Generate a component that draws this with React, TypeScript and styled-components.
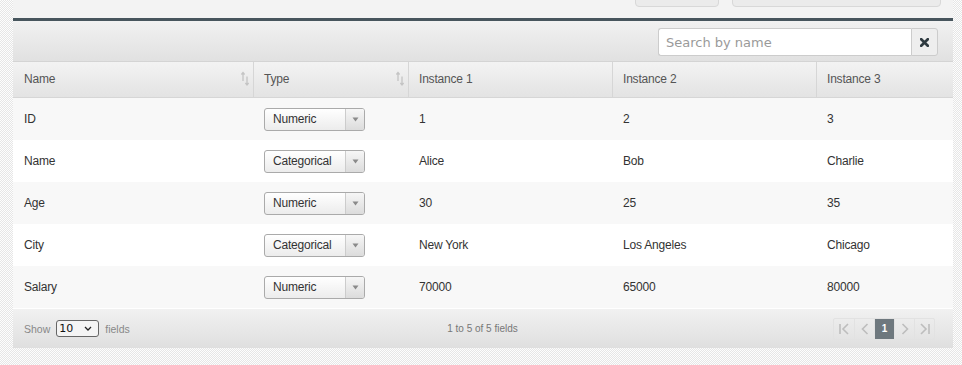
import React from "react";
import styled, { createGlobalStyle } from "styled-components";

const Global = createGlobalStyle`
  html, body { margin: 0; padding: 0; }
  body {
    width: 962px;
    height: 365px;
    overflow: hidden;
    background-color: #fdfdfd;
    background-image: repeating-conic-gradient(#e6e6e6 0 25%, #fdfdfd 0 50%);
    background-size: 2px 2px;
    font-family: "Liberation Sans", Arial, sans-serif;
  }
`;

const Panel = styled.div`
  margin-left: 13px;
  width: 940px;
  display: flex;
  flex-direction: column;
`;

const TopStrip = styled.div`
  height: 18px;
  background: #f3f3f3;
  display: flex;
  align-items: flex-end;
  overflow: hidden;
`;

const TopButtons = styled.div`
  display: flex;
  gap: 13px;
  margin-left: 622px;
  margin-bottom: 11px;
`;

const TopButton = styled.div<{ $w: number }>`
  width: ${(p) => p.$w}px;
  height: 24px;
  box-sizing: border-box;
  border: 1px solid #d8d8d8;
  border-radius: 4px;
  background: #ebebeb;
`;

const DarkRule = styled.div`
  height: 3px;
  background: #47555d;
`;

const Toolbar = styled.div`
  height: 41px;
  box-sizing: border-box;
  border-bottom: 1px solid #d4d4d4;
  background: linear-gradient(#f1f1f1, #e1e1e1);
  display: flex;
  justify-content: flex-end;
  align-items: flex-start;
  padding: 7px 15px 0 0;
`;

const SearchGroup = styled.div`
  display: flex;
  height: 28px;
`;

const SearchInput = styled.input`
  width: 253px;
  height: 28px;
  box-sizing: border-box;
  border: 1px solid #cccccc;
  border-right: none;
  border-radius: 3px 0 0 3px;
  background: #fff;
  padding: 0 7px;
  font-family: "DejaVu Sans", sans-serif;
  font-size: 13px;
  color: #333;
  outline: none;
  &::placeholder { color: #9a9a9a; }
`;

const ClearButton = styled.div`
  width: 27px;
  height: 28px;
  box-sizing: border-box;
  border: 1px solid #cccccc;
  border-radius: 0 3px 3px 0;
  background: #eeeeee;
  display: flex;
  align-items: center;
  justify-content: center;
`;

const Table = styled.div`
  display: grid;
  grid-template-columns: 241px 155px 204px 204px 136px;
`;

const HeadCell = styled.div<{ $last?: boolean; $first?: boolean }>`
  height: 36px;
  box-sizing: border-box;
  border-bottom: 1px solid #d6d6d6;
  border-right: ${(p) => (p.$last ? "none" : "1px solid #d6d6d6")};
  background: linear-gradient(#f3f3f3, #e3e3e3);
  display: flex;
  align-items: center;
  justify-content: space-between;
  padding: 0 3px 2px ${(p) => (p.$first ? 11 : 10)}px;
  font-size: 12px;
  color: #555;
  letter-spacing: -0.2px;
`;

const Cell = styled.div<{ $odd: boolean; $first?: boolean }>`
  height: 42px;
  display: flex;
  align-items: center;
  padding-left: ${(p) => (p.$first ? 11 : 10)}px;
  font-size: 12px;
  color: #333;
  letter-spacing: -0.2px;
  background: ${(p) => (p.$odd ? "#f8f8f8" : "#ffffff")};
`;

const TypeSelect = styled.div`
  width: 101px;
  height: 23px;
  box-sizing: border-box;
  border: 1px solid #aaaaaa;
  border-radius: 3px;
  background: linear-gradient(#ffffff, #ececec);
  display: flex;
  align-items: stretch;
  overflow: hidden;
`;

const TypeLabel = styled.span`
  flex: 1;
  display: flex;
  align-items: center;
  padding-left: 8px;
  font-size: 12px;
  color: #333;
`;

const TypeArrow = styled.span`
  width: 18px;
  border-left: 1px solid #cccccc;
  background: linear-gradient(#f6f6f6, #dcdcdc);
  display: flex;
  align-items: center;
  justify-content: center;
`;

const Footer = styled.div`
  height: 40px;
  box-sizing: border-box;
  border-top: 1px solid #ffffff;
  background: linear-gradient(#f1f1f1, #dfdfdf);
  display: grid;
  grid-template-columns: 1fr auto 1fr;
  align-items: center;
  padding: 0 18px 0 11px;
  font-size: 10px;
  color: #888;
`;

const ShowBox = styled.div`
  display: flex;
  align-items: center;
  gap: 6px;
  font-size: 10.5px;
`;

const PageSize = styled.div`
  width: 43px;
  height: 17px;
  box-sizing: border-box;
  border: 1px solid #666;
  border-radius: 3px;
  background: #f4f4f4;
  display: flex;
  align-items: center;
  justify-content: space-between;
  padding: 0 6px 0 2px;
  font-family: "DejaVu Sans", sans-serif;
  font-size: 11px;
  color: #111;
`;

const Info = styled.div`
  text-align: center;
  color: #777;
  padding-left: 6px;
`;

const Pager = styled.div`
  justify-self: end;
  display: flex;
  border: 1px solid #e2e2e2;
  border-radius: 2px;
`;

const PageBtn = styled.div<{ $active?: boolean }>`
  width: 20px;
  height: 20px;
  box-sizing: border-box;
  border-left: 1px solid #e2e2e2;
  &:first-child { border-left: none; }
  background: ${(p) => (p.$active ? "#6e787e" : "transparent")};
  color: #fff;
  font-size: 10px;
  font-weight: bold;
  display: flex;
  align-items: center;
  justify-content: center;
`;

const SortIcon = () => (
  <svg width="10" height="18" viewBox="0 0 10 18">
    <path d="M3 2.5 L3 11 M1.4 4.5 L3 2.5 L4.6 4.5" stroke="#c4c4c4" strokeWidth="1.3" fill="none" />
    <path d="M7 6.5 L7 15 M5.4 13 L7 15 L8.6 13" stroke="#c4c4c4" strokeWidth="1.3" fill="none" />
  </svg>
);

const Tri = () => (
  <svg width="7" height="5" viewBox="0 0 7 5">
    <path d="M0.5 0.5 L6.5 0.5 L3.5 4.5 Z" fill="#8a8a8a" />
  </svg>
);

const PageIcon = ({ kind }: { kind: "first" | "prev" | "next" | "last" }) => {
  const s = "#bdbdbd";
  return (
    <svg width="14" height="14" viewBox="0 0 14 14">
      {kind === "first" && (
        <>
          <path d="M3 2 L3 12" stroke={s} strokeWidth="1.6" />
          <path d="M11 2 L6 7 L11 12" stroke={s} strokeWidth="1.6" fill="none" />
        </>
      )}
      {kind === "prev" && <path d="M9.5 2 L4.5 7 L9.5 12" stroke={s} strokeWidth="1.6" fill="none" />}
      {kind === "next" && <path d="M4.5 2 L9.5 7 L4.5 12" stroke={s} strokeWidth="1.6" fill="none" />}
      {kind === "last" && (
        <>
          <path d="M3 2 L8 7 L3 12" stroke={s} strokeWidth="1.6" fill="none" />
          <path d="M11 2 L11 12" stroke={s} strokeWidth="1.6" />
        </>
      )}
    </svg>
  );
};

const rows = [
  { name: "ID", type: "Numeric", v: ["1", "2", "3"] },
  { name: "Name", type: "Categorical", v: ["Alice", "Bob", "Charlie"] },
  { name: "Age", type: "Numeric", v: ["30", "25", "35"] },
  { name: "City", type: "Categorical", v: ["New York", "Los Angeles", "Chicago"] },
  { name: "Salary", type: "Numeric", v: ["70000", "65000", "80000"] },
];

export default function App() {
  return (
    <>
      <Global />
      <Panel>
        <TopStrip>
          <TopButtons>
            <TopButton $w={84} />
            <TopButton $w={209} />
          </TopButtons>
        </TopStrip>
        <DarkRule />
        <Toolbar>
          <SearchGroup>
            <SearchInput placeholder="Search by name" />
            <ClearButton>
              <svg width="9" height="9" viewBox="0 0 9 9">
                <path d="M1.2 1.2 L7.8 7.8 M7.8 1.2 L1.2 7.8" stroke="#2e3a40" strokeWidth="2.7" strokeLinecap="square" />
              </svg>
            </ClearButton>
          </SearchGroup>
        </Toolbar>
        <Table>
          <HeadCell $first>
            Name <SortIcon />
          </HeadCell>
          <HeadCell>
            Type <SortIcon />
          </HeadCell>
          <HeadCell>Instance 1</HeadCell>
          <HeadCell>Instance 2</HeadCell>
          <HeadCell $last>Instance 3</HeadCell>
          {rows.map((r, i) => (
            <React.Fragment key={r.name}>
              <Cell $odd={i % 2 === 0} $first>{r.name}</Cell>
              <Cell $odd={i % 2 === 0}>
                <TypeSelect>
                  <TypeLabel>{r.type}</TypeLabel>
                  <TypeArrow>
                    <Tri />
                  </TypeArrow>
                </TypeSelect>
              </Cell>
              {r.v.map((v, j) => (
                <Cell key={j} $odd={i % 2 === 0}>
                  {v}
                </Cell>
              ))}
            </React.Fragment>
          ))}
        </Table>
        <Footer>
          <ShowBox>
            Show
            <PageSize>
              <span>10</span>
              <svg width="8" height="5" viewBox="0 0 8 5">
                <path d="M1 1 L4 4 L7 1" stroke="#222" strokeWidth="1.3" fill="none" />
              </svg>
            </PageSize>
            fields
          </ShowBox>
          <Info>1 to 5 of 5 fields</Info>
          <Pager>
            <PageBtn><PageIcon kind="first" /></PageBtn>
            <PageBtn><PageIcon kind="prev" /></PageBtn>
            <PageBtn $active>1</PageBtn>
            <PageBtn><PageIcon kind="next" /></PageBtn>
            <PageBtn><PageIcon kind="last" /></PageBtn>
          </Pager>
        </Footer>
      </Panel>
    </>
  );
}
